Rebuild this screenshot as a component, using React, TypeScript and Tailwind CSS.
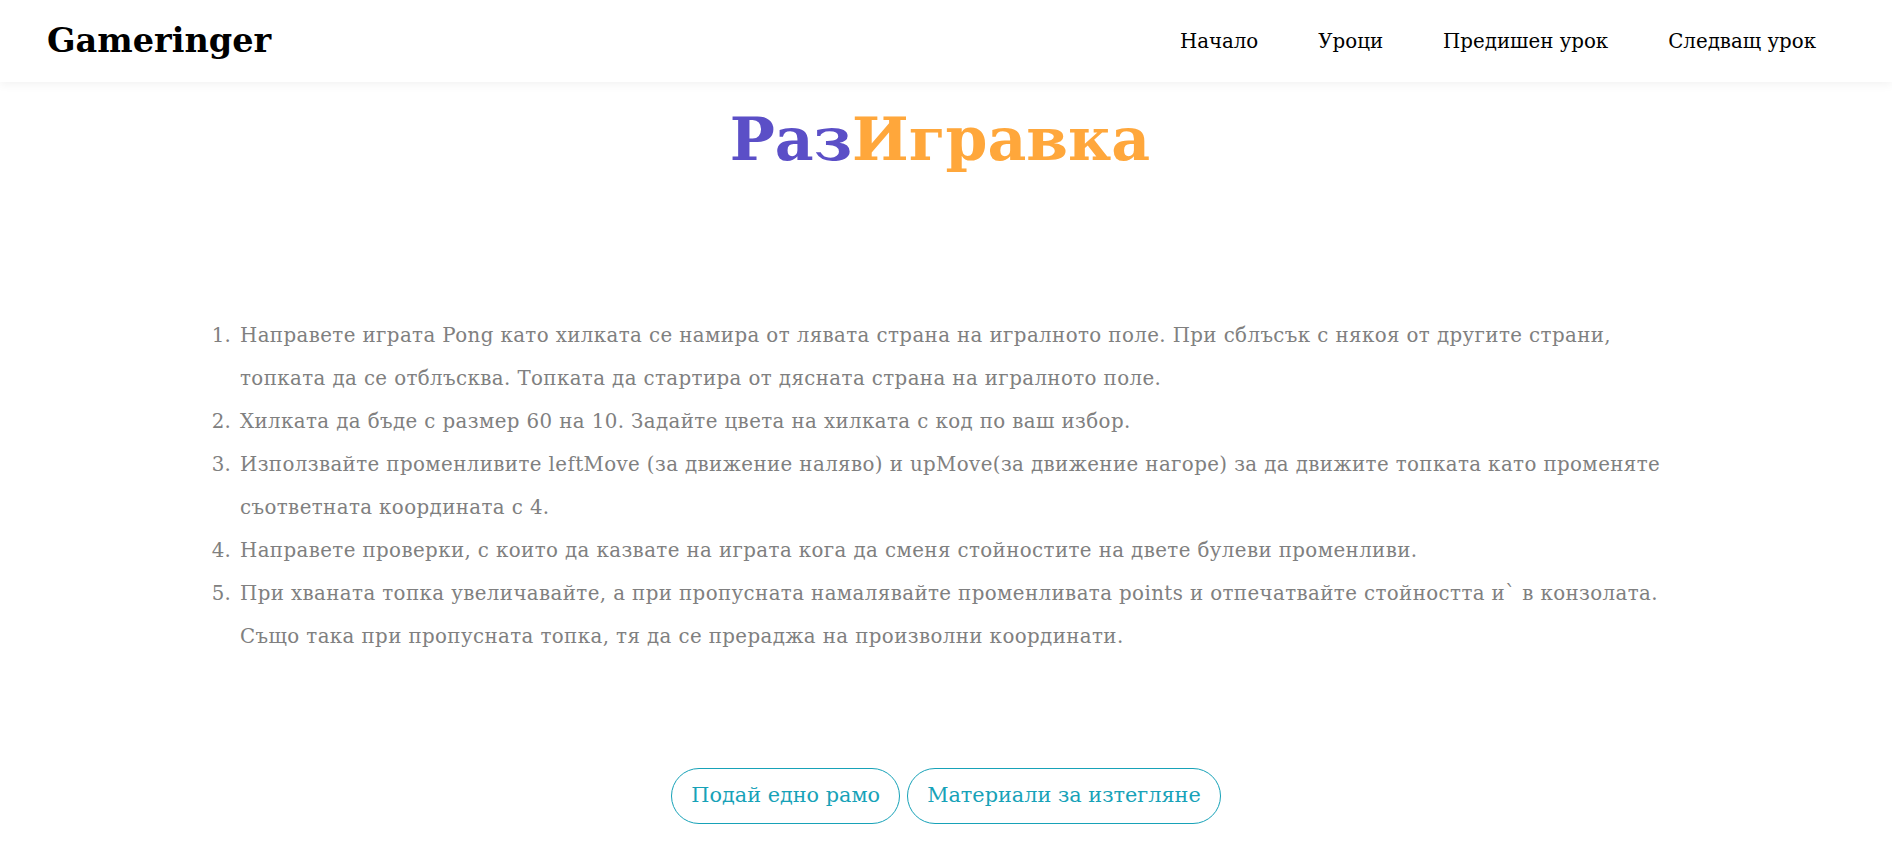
import React from 'react';

const navLinks = ['Начало', 'Уроци', 'Предишен урок', 'Следващ урок'];

// each task is split into the lines it shows on screen
const tasks: string[][] = [
  [
    'Направете играта Pong като хилката се намира от лявата страна на игралното поле. При сблъсък с някоя от другите страни,',
    'топката да се отблъсква. Топката да стартира от дясната страна на игралното поле.',
  ],
  ['Хилката да бъде с размер 60 на 10. Задайте цвета на хилката с код по ваш избор.'],
  [
    'Използвайте променливите leftMove (за движение наляво) и upMove(за движение нагоре) за да движите топката като променяте',
    'съответната координата с 4.',
  ],
  ['Направете проверки, с които да казвате на играта кога да сменя стойностите на двете булеви променливи.'],
  [
    'При хваната топка увеличавайте, а при пропусната намалявайте променливата points и отпечатвайте стойността и` в конзолата.',
    'Също така при пропусната топка, тя да се прераджа на произволни координати.',
  ],
];

const serif = { fontFamily: '"DejaVu Serif", "Liberation Serif", serif' };

const App: React.FC = () => {
  return (
    <div className="min-h-screen bg-white" style={serif}>
      {/* navbar */}
      <nav className="h-[82px] flex items-center justify-between pl-[47px] pr-[76px] bg-white shadow-[0_2px_10px_rgba(0,0,0,0.06)]">
        <a className="text-[33.5px] font-bold text-black leading-none">Gameringer</a>
        <ul className="flex items-center gap-[60px] text-[19.8px] text-black pt-[2px]">
          {navLinks.map((link) => (
            <li key={link}>{link}</li>
          ))}
        </ul>
      </nav>

      <h1 className="mt-[19px] pr-[12px] text-center text-[60px] font-bold leading-[77px]">
        <span className="text-[#5b4fc7]">Раз</span>
        <span className="text-[#ffa73b]">Игравка</span>
      </h1>

      <div className="mt-[136px] pl-[200px]">
        <ol className="w-[1600px] pl-[38px] list-decimal text-[19.8px] leading-[43px] tracking-[0.4px] text-[#808080]">
          {tasks.map((lines, i) => (
            <li key={i} className="pl-[2px]">
              {lines.map((line, j) => (
                <React.Fragment key={j}>
                  {j > 0 && <br />}
                  {line}
                </React.Fragment>
              ))}
            </li>
          ))}
        </ol>
      </div>

      <div className="mt-[110px] flex justify-center gap-[7px]">
        <button className="h-[56px] px-[19px] rounded-full border border-[#17a2b8] text-[#17a2b8] text-[20.8px]">
          Подай едно рамо
        </button>
        <button className="h-[56px] px-[19px] rounded-full border border-[#17a2b8] text-[#17a2b8] text-[20.8px]">
          Материали за изтегляне
        </button>
      </div>
    </div>
  );
};

export default App;
